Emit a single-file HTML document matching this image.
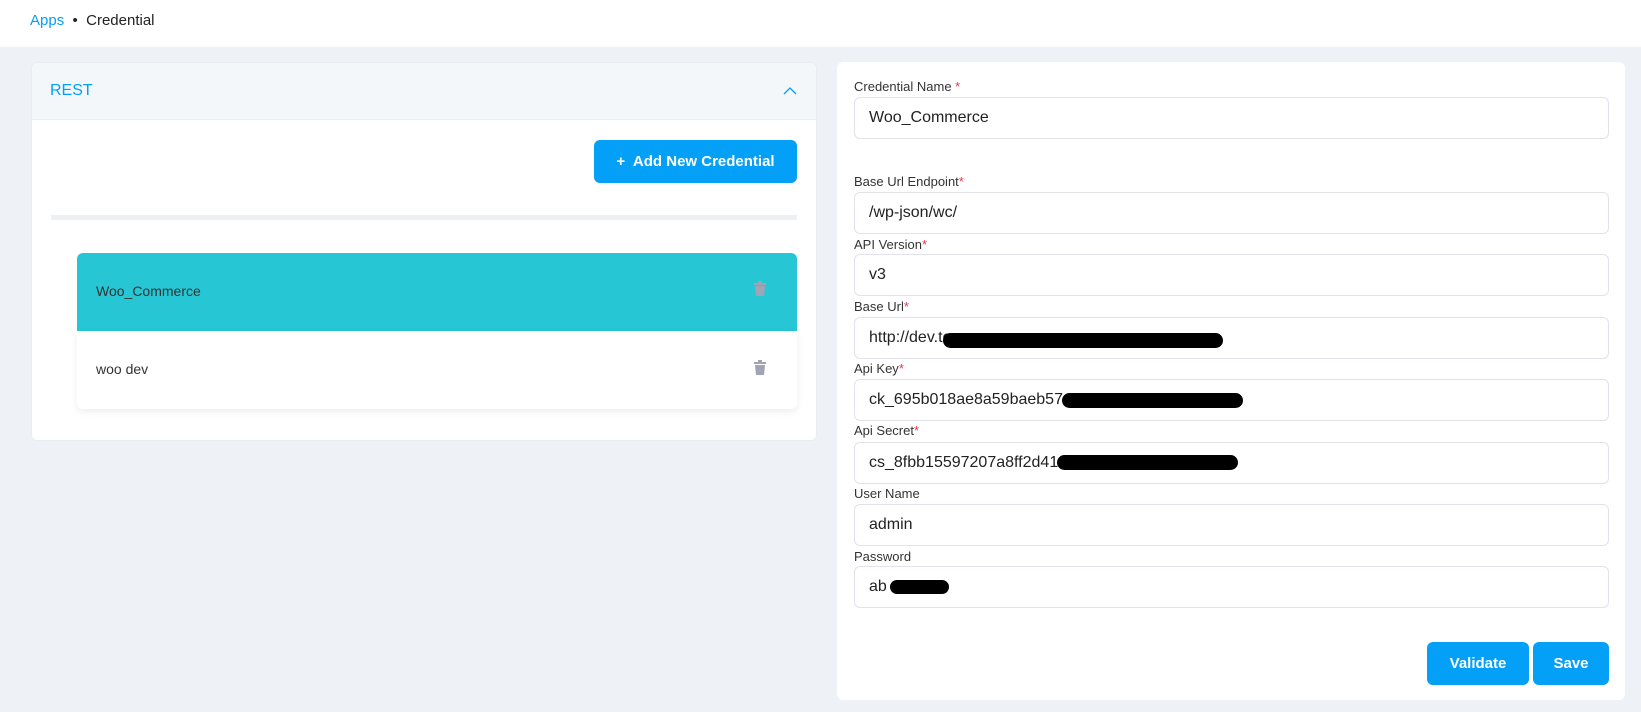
<!DOCTYPE html>
<html><head><meta charset="utf-8"><style>
*{box-sizing:border-box;margin:0;padding:0}
body{width:1641px;height:712px;background:#eef1f5;font-family:"Liberation Sans",sans-serif;position:relative;overflow:hidden;color:#222}
.a{position:absolute}
.hdr{left:0;top:0;width:1641px;height:47px;background:#fff}
.card{background:#fff;border-radius:6px}
.lbl{position:absolute;left:854px;font-size:13px;color:#333}
.lbl i{color:#e53950;font-style:normal}
.inp{position:absolute;left:854px;width:755px;height:42px;border:1px solid #e1e3ea;border-radius:6px;background:#fff;font-size:16px;padding:0 0 0 14px;line-height:40px;color:#222}
.btn{position:absolute;background:#049ff6;color:#fff;font-weight:bold;border-radius:6px;text-align:center;font-size:15px}
.blob{position:absolute;background:#000;border-radius:10px}
</style></head><body>
<div class="a hdr"></div>
<div class="a" style="left:30px;top:12px;font-size:15px"><span style="color:#049ff6">Apps</span> &nbsp;•&nbsp; <span>Credential</span></div>

<div class="a card" style="left:31px;top:62px;width:786px;height:379px;border:1px solid #e9edf2"></div>
<div class="a" style="left:32px;top:63px;width:784px;height:57px;background:#f4f7fa;border-bottom:1px solid #e9edf2;border-radius:6px 6px 0 0"></div>
<div class="a" style="left:50px;top:82px;font-size:16px;color:#049ff6">REST</div>
<svg class="a" style="left:783px;top:86px" width="14" height="10"><path d="M1 8 L7 2 L13 8" fill="none" stroke="#049ff6" stroke-width="1.3"/></svg>
<div class="btn" style="left:594px;top:140px;width:203px;height:43px;line-height:43px">+&nbsp; Add New Credential</div>
<div class="a" style="left:51px;top:215px;width:746px;height:5px;background:#eef1f4"></div>
<div class="a" style="left:77px;top:253px;width:720px;height:78px;background:#26c6d4;border-radius:6px 6px 0 0"></div>
<div class="a" style="left:96px;top:283px;font-size:14px;color:#333">Woo_Commerce</div>
<div class="a" style="left:77px;top:331px;width:720px;height:78px;background:#fff;box-shadow:0 3px 8px rgba(0,0,0,.07);border-radius:0 0 6px 6px"></div>
<div class="a" style="left:96px;top:361px;font-size:14px;color:#333">woo dev</div>
<svg class="a" style="left:753px;top:281px" width="14" height="16"><rect x="1" y="2" width="12" height="2" fill="#a0a4b4"/><rect x="5" y="0" width="4" height="2" fill="#a0a4b4"/><path d="M2 5 H12 L11 15 H3 Z" fill="#a0a4b4"/></svg>
<svg class="a" style="left:753px;top:360px" width="14" height="16"><rect x="1" y="2" width="12" height="2" fill="#a0a4b4"/><rect x="5" y="0" width="4" height="2" fill="#a0a4b4"/><path d="M2 5 H12 L11 15 H3 Z" fill="#a0a4b4"/></svg>

<div class="a card" style="left:837px;top:62px;width:788px;height:638px"></div>
<div class="lbl" style="top:79px">Credential Name <i>*</i></div>
<div class="inp" style="top:97px">Woo_Commerce</div>
<div class="lbl" style="top:174px">Base Url Endpoint<i>*</i></div>
<div class="inp" style="top:192px">/wp-json/wc/</div>
<div class="lbl" style="top:237px">API Version<i>*</i></div>
<div class="inp" style="top:254px">v3</div>
<div class="lbl" style="top:299px">Base Url<i>*</i></div>
<div class="inp" style="top:317px">http://dev.te</div>
<div class="lbl" style="top:361px">Api Key<i>*</i></div>
<div class="inp" style="top:379px">ck_695b018ae8a59baeb57</div>
<div class="lbl" style="top:423px">Api Secret<i>*</i></div>
<div class="inp" style="top:442px">cs_8fbb15597207a8ff2d41</div>
<div class="lbl" style="top:486px">User Name</div>
<div class="inp" style="top:504px">admin</div>
<div class="lbl" style="top:549px">Password</div>
<div class="inp" style="top:566px">ab</div>
<div class="blob" style="left:943px;top:333px;width:280px;height:15px;border-radius:8px"></div>
<div class="blob" style="left:1062px;top:393px;width:181px;height:15px"></div>
<div class="blob" style="left:1057px;top:455px;width:181px;height:15px"></div>
<div class="blob" style="left:890px;top:580px;width:59px;height:14px"></div>
<div class="btn" style="left:1427px;top:642px;width:102px;height:43px;line-height:43px">Validate</div>
<div class="btn" style="left:1533px;top:642px;width:76px;height:43px;line-height:43px">Save</div>
</body></html>
